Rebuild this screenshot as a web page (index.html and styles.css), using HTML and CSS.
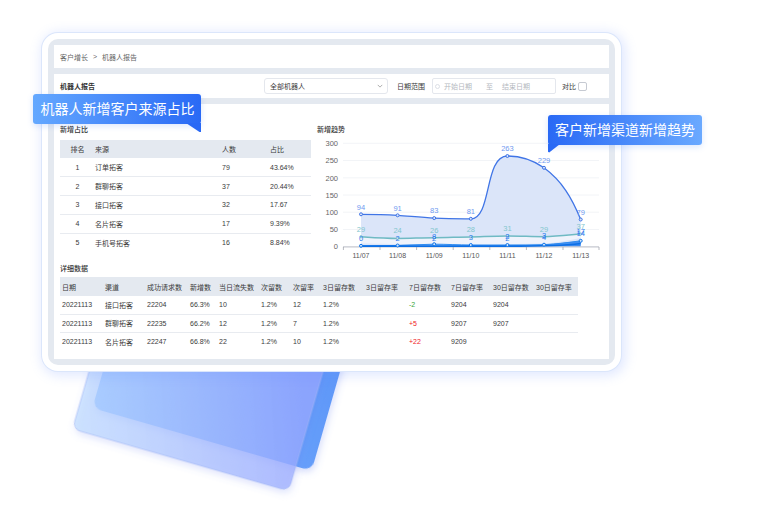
FILE: index.html
```html
<!DOCTYPE html>
<html lang="zh">
<head>
<meta charset="utf-8">
<title>机器人报告</title>
<link rel="stylesheet" href="styles.css">
</head>
<body>
<div class="stage">
  <svg class="cards" viewBox="0 0 760 520" aria-hidden="true">
    <defs>
      <linearGradient id="backFill" x1="0" y1="1" x2="1" y2="0.5">
        <stop offset="0" stop-color="#7fb8ff"/>
        <stop offset="1" stop-color="#5f97f8"/>
      </linearGradient>
      <linearGradient id="frontFill" x1="0" y1="1" x2="1" y2="0.7">
        <stop offset="0" stop-color="#bfdcff" stop-opacity=".7"/>
        <stop offset="1" stop-color="#98a8ff" stop-opacity=".75"/>
      </linearGradient>
      <filter id="cardShadow" x="-20%" y="-20%" width="140%" height="140%">
        <feDropShadow dx="2" dy="3" stdDeviation="3.5" flood-color="#5a78f0" flood-opacity=".25"/>
      </filter>
    </defs>
    <rect class="card-back" transform="translate(92.4 408) rotate(16)" x="0" y="-200" width="228" height="200" rx="9" fill="url(#backFill)" filter="url(#cardShadow)"/>
    <rect class="card-front" transform="translate(72.5 429) rotate(16)" x="0" y="-200" width="225" height="200" rx="8" fill="url(#frontFill)" filter="url(#cardShadow)"/>
  </svg>

  <div class="frame">
    <div class="inner">
      <div class="panel crumbs"><span>客户增长</span><span class="crumb-sep">&gt;</span><span>机器人报告</span></div>

      <div class="panel toolbar">
        <strong class="toolbar-title">机器人报告</strong>
        <div class="select">
          <span>全部机器人</span>
          <svg class="chevron" viewBox="0 0 8 5"><path d="M1 1l3 3 3-3" fill="none" stroke="#777" stroke-width=".8"/></svg>
        </div>
        <span class="label-date">日期范围</span>
        <div class="range">
          <span class="range-icon"></span>
          <span class="range-start">开始日期</span>
          <span class="range-to">至</span>
          <span>结束日期</span>
        </div>
        <span class="label-compare">对比</span>
        <span class="checkbox"></span>
      </div>

      <div class="panel main">
        <div class="top">
          <section class="share">
            <h2 class="heading">新增占比</h2>
            <table class="grid share-table">
              <colgroup><col class="s1"><col class="s2"><col class="s3"><col class="s4"></colgroup>
              <thead><tr><th class="center">排名</th><th>来源</th><th>人数</th><th>占比</th></tr></thead>
              <tbody>
                <tr><td class="center">1</td><td>订单拓客</td><td>79</td><td>43.64%</td></tr>
                <tr><td class="center">2</td><td>群聊拓客</td><td>37</td><td>20.44%</td></tr>
                <tr><td class="center">3</td><td>接口拓客</td><td>32</td><td>17.67</td></tr>
                <tr><td class="center">4</td><td>名片拓客</td><td>17</td><td>9.39%</td></tr>
                <tr><td class="center">5</td><td>手机号拓客</td><td>16</td><td>8.84%</td></tr>
              </tbody>
            </table>
          </section>
          <section class="trend">
            <h2 class="heading">新增趋势</h2>
            <svg class="chart" viewBox="317 136 291 128">
              <defs>
                <linearGradient id="lowFill" x1="0" y1="0" x2="1" y2="0">
                  <stop offset="0" stop-color="#2f8bf0" stop-opacity=".15"/>
                  <stop offset="1" stop-color="#1f7bf0" stop-opacity=".85"/>
                </linearGradient>
              </defs>
              <g class="gridlines">
                <path d="M343 143.3H599M343 160.5H599M343 177.8H599M343 195H599M343 212.2H599M343 229.5H599"/>
              </g>
              <g class="y-labels">
                <text x="338" y="146">300</text><text x="338" y="163.2">250</text><text x="338" y="180.5">200</text>
                <text x="338" y="197.7">150</text><text x="338" y="214.9">100</text><text x="338" y="232.2">50</text><text x="338" y="249.4">0</text>
              </g>

              <path class="area-main" d="M361 214.3C373 214.3 385 214.5 397.6 215.3C410 216.2 422 217.5 434.2 218.1C446 218.7 458 218.9 470.8 218.8C492 218.8 484 156 507.4 156C520 156 533 160 544 167.8C562 181 572 198 580.7 219.5V246.7H361Z"/>
              <path class="area-teal" d="M361 236.7C373 237.5 385 238.4 397.6 238.4C410 238.4 422 237.7 434.2 237.7C446 237.7 458 237.1 470.8 237C483 236.7 495 236 507.4 236C520 236 532 236.7 544 236.7C557 236.5 569 235 580.7 234V238C569 240 557 243 544 243.5C520 244 495 244.5 470.8 244.5C446 244.5 400 244.5 361 243.5Z"/>
              <path class="area-low" d="M361 246C400 245.5 420 243.5 434.2 244C470 245.5 510 245.5 544 244.5C557 244 569 242 580.7 240.8V246.7H361Z"/>

              <path class="line-main" d="M361 214.3C373 214.3 385 214.5 397.6 215.3C410 216.2 422 217.5 434.2 218.1C446 218.7 458 218.9 470.8 218.8C492 218.8 484 156 507.4 156C520 156 533 160 544 167.8C562 181 572 198 580.7 219.5"/>
              <path class="line-teal" d="M361 236.7C373 237.5 385 238.4 397.6 238.4C410 238.4 422 237.7 434.2 237.7C446 237.7 458 237.1 470.8 237C483 236.7 495 236 507.4 236C520 236 532 236.7 544 236.7C557 236.5 569 235 580.7 234"/>
              <path class="line-low" d="M361 245.8C373 245.5 385 245.7 397.6 245.5C410 245.2 422 244.3 434.2 244.2C446 244.2 458 244.9 470.8 245C483 245.1 495 245 507.4 245C520 245 532 245 544 244.7C557 244 569 242.4 580.7 240.8"/>
              <path class="axis" d="M343 246.9H599"/>
              <path class="line-base" d="M361 246.2C400 246 470 246.2 507 246.2C530 246.2 560 246 580.7 243.5"/>

              <g class="dots-main">
                <circle cx="361" cy="214.3" r="1.5"/><circle cx="397.6" cy="215.3" r="1.5"/><circle cx="434.2" cy="218.1" r="1.5"/><circle cx="470.8" cy="218.8" r="1.5"/><circle cx="507.4" cy="156" r="1.5"/><circle cx="544" cy="167.8" r="1.5"/><circle cx="580.7" cy="219.5" r="1.5"/>
              </g>
              <g class="dots-teal">
                <circle cx="361" cy="236.7" r="1.2"/><circle cx="397.6" cy="238.4" r="1.2"/><circle cx="434.2" cy="237.7" r="1.2"/><circle cx="470.8" cy="237" r="1.2"/><circle cx="507.4" cy="236" r="1.2"/><circle cx="544" cy="236.7" r="1.2"/><circle cx="580.7" cy="234" r="1.2"/>
              </g>
              <g class="dots-low">
                <circle cx="361" cy="245.8" r="1.5"/><circle cx="397.6" cy="245.5" r="1.5"/><circle cx="434.2" cy="244.2" r="1.5"/><circle cx="470.8" cy="245" r="1.5"/><circle cx="507.4" cy="245" r="1.5"/><circle cx="544" cy="244.7" r="1.5"/><circle cx="580.7" cy="240.8" r="1.5"/>
              </g>

              <g class="labels-main">
                <text x="361" y="209.5">94</text><text x="397.6" y="210.5">91</text><text x="434.2" y="213.3">83</text><text x="470.8" y="213.8">81</text><text x="507.4" y="150.5">263</text><text x="544" y="162.5">229</text><text x="580.7" y="214.5">79</text>
              </g>
              <g class="labels-teal">
                <text x="361" y="231.5">29</text><text x="397.6" y="233">24</text><text x="434.2" y="232.5">26</text><text x="470.8" y="232">28</text><text x="507.4" y="230.5">31</text><text x="544" y="231.5">29</text><text x="580.7" y="228.5">37</text>
              </g>
              <g class="labels-low">
                <text x="361" y="241">0</text><text x="397.6" y="240.5">2</text><text x="434.2" y="238.5">8</text><text x="434.2" y="241">2</text><text x="470.8" y="239.5">3</text><text x="507.4" y="238.5">2</text><text x="507.4" y="241">2</text><text x="544" y="237.5">3</text><text x="544" y="240">4</text><text x="580.7" y="233.5">17</text><text x="580.7" y="235.5">14</text>
              </g>

              <path class="ticks" d="M343.4 247v3M380 247v3M416.6 247v3M453.2 247v3M489.8 247v3M526.4 247v3M563 247v3M599 247v3"/>
              <g class="x-labels">
                <text x="361" y="257.5">11/07</text><text x="397.6" y="257.5">11/08</text><text x="434.2" y="257.5">11/09</text><text x="470.8" y="257.5">11/10</text><text x="507.4" y="257.5">11/11</text><text x="544" y="257.5">11/12</text><text x="580.7" y="257.5">11/13</text>
              </g>
            </svg>
          </section>
        </div>

        <section class="detail">
          <h2 class="heading">详细数据</h2>
          <table class="grid detail-table">
            <colgroup>
              <col class="d1"><col class="d2"><col class="d3"><col class="d4"><col class="d5"><col class="d6"><col class="d7"><col class="d8"><col class="d9"><col class="d10"><col class="d11"><col class="d12"><col class="d13">
            </colgroup>
            <thead>
              <tr><th>日期</th><th>渠道</th><th>成功请求数</th><th>新增数</th><th>当日流失数</th><th>次留数</th><th>次留率</th><th>3日留存数</th><th>3日留存率</th><th>7日留存数</th><th>7日留存率</th><th>30日留存数</th><th>30日留存率</th></tr>
            </thead>
            <tbody>
              <tr><td>20221113</td><td>接口拓客</td><td>22204</td><td>66.3%</td><td>10</td><td>1.2%</td><td>12</td><td>1.2%</td><td></td><td class="down">-2</td><td>9204</td><td>9204</td><td></td></tr>
              <tr><td>20221113</td><td>群聊拓客</td><td>22235</td><td>66.2%</td><td>12</td><td>1.2%</td><td>7</td><td>1.2%</td><td></td><td class="up">+5</td><td>9207</td><td>9207</td><td></td></tr>
              <tr><td>20221113</td><td>名片拓客</td><td>22247</td><td>66.8%</td><td>22</td><td>1.2%</td><td>10</td><td>1.2%</td><td></td><td class="up">+22</td><td>9209</td><td></td><td></td></tr>
            </tbody>
          </table>
        </section>
      </div>
    </div>
  </div>

  <div class="callout callout-left">机器人新增客户来源占比</div>
  <div class="callout callout-right">客户新增渠道新增趋势</div>
</div>
</body>
</html>
```

FILE: styles.css
```css
* { box-sizing: border-box; }
html, body { margin: 0; padding: 0; background: #fff; }
body {
  font-family: "Liberation Sans", "Noto Sans CJK SC", sans-serif;
  color: #3a3a3a;
  font-size: 7px;
}
.stage {
  position: relative;
  width: 760px;
  height: 520px;
  overflow: hidden;
  padding: 33px 0 0 42px;
}
.cards { position: absolute; left: 0; top: 0; width: 760px; height: 520px; }
.card-front { stroke: #a3b7f3; stroke-width: .6; }

.frame {
  position: relative;
  width: 579px;
  height: 338px;
  padding: 6px;
  background: #fff;
  border-radius: 16px;
  box-shadow: 0 0 0 1px #dbe6fb, 2px 2px 12px 3px rgba(110, 145, 255, .2);
}
.inner {
  height: 100%;
  padding: 6px;
  background: #e4e9f0;
  border-radius: 10px;
  display: flex;
  flex-direction: column;
  gap: 6px;
}
.panel { background: #fff; }

.crumbs {
  height: 23px;
  padding-left: 6px;
  display: flex;
  align-items: center;
  color: #666;
}
.crumb-sep { margin: 0 5px; }

.toolbar {
  height: 24px;
  padding-left: 6px;
  display: flex;
  align-items: center;
}
.toolbar-title { width: 204px; font-weight: 700; color: #333; }
.select {
  width: 124px;
  height: 16px;
  padding: 0 3px 0 5px;
  margin-right: 9px;
  border: 1px solid #e4e7ed;
  border-radius: 3px;
  display: flex;
  align-items: center;
  justify-content: space-between;
}
.chevron { width: 6px; height: 4px; margin-right: 1px; }
.label-date { width: 35px; }
.range {
  width: 124px;
  height: 16px;
  padding-left: 2px;
  border: 1px solid #e4e7ed;
  border-radius: 2px;
  display: flex;
  align-items: center;
  color: #b5b9c0;
}
.range-icon {
  width: 5px;
  height: 5px;
  border: 1px solid #dcdfe6;
  border-radius: 50%;
  margin-right: 4px;
}
.range-start { width: 42px; }
.range-to { width: 16px; }
.label-compare { margin-left: 6px; width: 16px; }
.checkbox {
  width: 9px;
  height: 9px;
  border: 1px solid #c6cad2;
  border-radius: 2px;
}

.main {
  flex: 1;
  padding: 0 6px;
  min-height: 0;
}
.top { display: flex; gap: 6px; height: 161px; }
.share { width: 251px; flex: none; }
.trend { flex: 1; min-width: 0; position: relative; }
.heading {
  margin: 0;
  font-size: 7px;
  font-weight: 500;
  line-height: 9px;
  color: #333;
}
.share .heading, .trend .heading { padding-top: 21px; height: 36px; }
.detail .heading { height: 12px; line-height: 8px; }

.chart {
  position: absolute;
  left: 0;
  top: 32px;
  width: 291px;
  height: 128px;
  display: block;
}
.gridlines path { stroke: #eff1f5; stroke-width: .8; fill: none; }
.y-labels text { font-size: 7.5px; fill: #666; text-anchor: end; }
.x-labels text { font-size: 7px; fill: #555; text-anchor: middle; }
.axis { stroke: #c6c8d0; stroke-width: 1.2; fill: none; }
.ticks { stroke: #999ca6; stroke-width: .7; fill: none; }
.area-main { fill: #dbe5f9; }
.area-teal { fill: #fff; fill-opacity: .55; }
.area-low { fill: url(#lowFill); }
.line-main { fill: none; stroke: #4075e6; stroke-width: 1.3; }
.line-teal { fill: none; stroke: #6fbac4; stroke-width: 1.5; }
.line-low { fill: none; stroke: #2f8cf0; stroke-width: 1; }
.line-base { fill: none; stroke: #0b6fe6; stroke-width: 1.7; }
.dots-main circle { fill: #dbe5f9; stroke: #3d73e6; stroke-width: 1; }
.dots-teal circle { fill: #dfeff2; stroke: #6fbac4; stroke-width: .7; }
.dots-low circle { fill: #d4e6fb; stroke: #0f74e8; stroke-width: 1; }
.labels-main text { font-size: 7.5px; fill: #6f9af0; text-anchor: middle; }
.labels-teal text { font-size: 7.5px; fill: #82c6ce; text-anchor: middle; }
.labels-low text { font-size: 7.5px; fill: #2f7dee; text-anchor: middle; }

.grid {
  border-collapse: collapse;
  table-layout: fixed;
  font-size: 7px;
  white-space: nowrap;
}
.grid th {
  background: #e4e9f0;
  font-weight: 400;
  text-align: left;
  padding: 0;
  color: #3a3a3a;
}
.grid td {
  padding: 0;
  border-bottom: 1px solid #e8ebf0;
  color: #3a3a3a;
}
.grid .center { text-align: center; }

.share-table { width: 251px; }
.share-table th { height: 18px; }
.share-table td { height: 18.8px; }
.share-table tr:last-child td { border-bottom: 0; }
.s1 { width: 35px; }
.s2 { width: 127px; }
.s3 { width: 48px; }
.s4 { width: 41px; }

.detail-table { width: 518px; }
.detail-table th { height: 19px; padding-left: 2px; }
.detail-table td { height: 18.2px; padding-left: 2px; }
.detail-table tr:last-child td { border-bottom: 0; }
.d1 { width: 43px; }
.d2 { width: 42px; }
.d3 { width: 43px; }
.d4 { width: 29px; }
.d5 { width: 42px; }
.d6 { width: 32px; }
.d7 { width: 30px; }
.d8 { width: 43px; }
.d9 { width: 43px; }
.d10 { width: 42px; }
.d11 { width: 42px; }
.d12 { width: 43px; }
.d13 { width: 44px; }
.grid td.down { color: #3aa63a; }
.grid td.up { color: #f01c1c; }

.callout {
  position: absolute;
  height: 30px;
  border-radius: 3px;
  color: #fff;
  font-size: 14px;
  line-height: 30px;
  text-align: center;
  white-space: nowrap;
}
.callout::after {
  content: "";
  position: absolute;
  top: 29px;
  width: 15px;
  height: 9px;
}
.callout-left {
  left: 33px;
  top: 94px;
  width: 168px;
  padding-left: 1px;
  background: linear-gradient(90deg, #64a8ff, #2969f5);
  box-shadow: 0 2px 6px rgba(60, 120, 245, .18);
}
.callout-left::after {
  right: 0;
  background: #2969f5;
  clip-path: polygon(0 0, 100% 0, 100% 100%, 90% 100%);
}
.callout-right {
  left: 548px;
  top: 115px;
  width: 154px;
  background: linear-gradient(90deg, #2969f5, #6aa9ff);
  box-shadow: 0 2px 6px rgba(60, 120, 245, .18);
}
.callout-right::after {
  left: 0;
  width: 12px;
  background: #2969f5;
  clip-path: polygon(0 0, 100% 0, 10% 95%, 0 85%);
}
```
